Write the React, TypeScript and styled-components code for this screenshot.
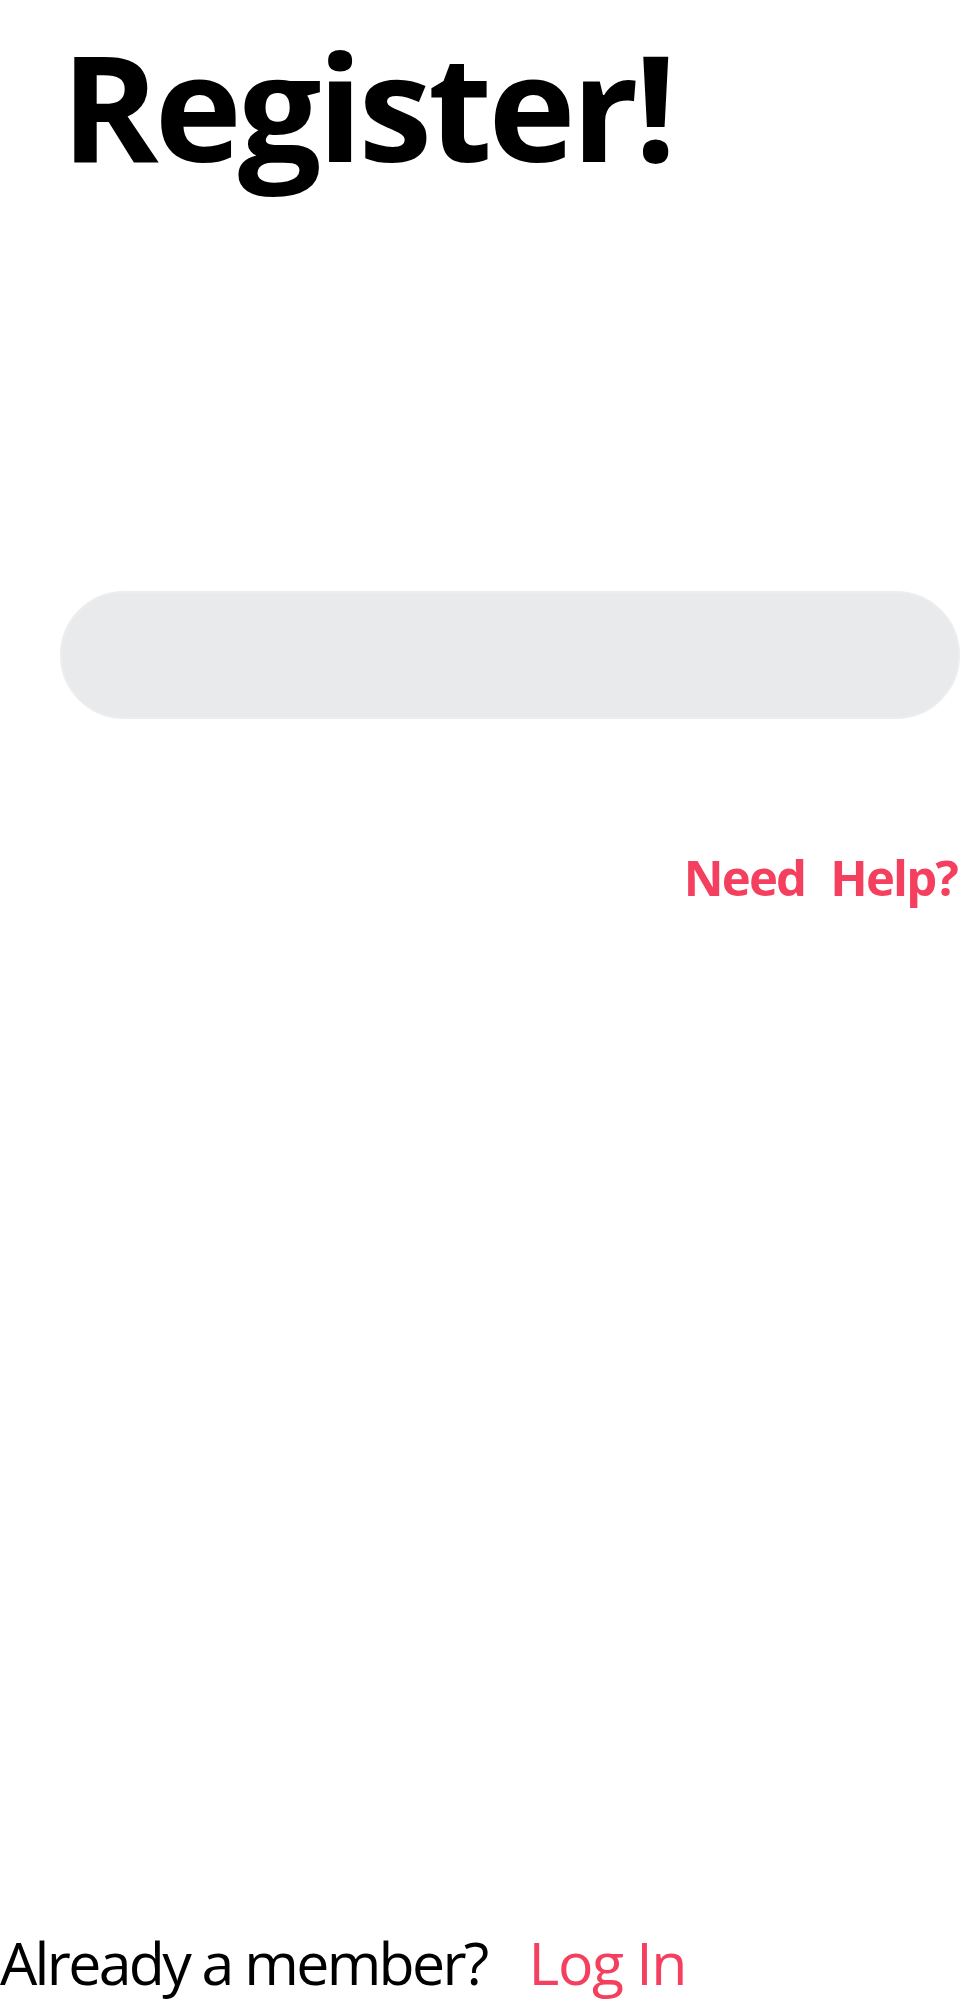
import React from "react";
import styled, { createGlobalStyle } from "styled-components";

const GlobalStyle = createGlobalStyle`
  html, body {
    margin: 0;
    padding: 0;
    background: #ffffff;
  }
  body {
    font-family: "Open Sans", "Noto Sans", sans-serif;
    color: #000000;
  }
  * { box-sizing: border-box; }
`;

const Page = styled.div`
  width: 963px;
  height: 2001px;
  display: flex;
  flex-direction: column;
  overflow: hidden;
`;

const Title = styled.h1`
  margin: 31px 0 0 0;
  padding-left: 61px;
  font-size: 148px;
  line-height: 1;
  font-weight: 700;
  letter-spacing: -4.1px;
`;

const Form = styled.form`
  display: flex;
  flex-direction: column;
  padding-left: 60px;
  margin-top: 412px;
`;

const Field = styled.input`
  width: 900px;
  height: 128px;
  border-radius: 64px;
  border: 2px solid #ededed;
  background: #e8eaeb;
  outline: none;
  padding: 0 48px;
  font-size: 32px;
  font-family: inherit;
`;

const HelpRow = styled.div`
  display: flex;
  justify-content: flex-end;
  padding-right: 6px;
  margin-top: 134px;
`;

const HelpLink = styled.a`
  color: #f43f5e;
  font-weight: 700;
  font-size: 49px;
  line-height: 1;
  text-decoration: none;
  letter-spacing: -1.8px;
  word-spacing: 14px;
`;

const Spacer = styled.div`
  flex: 1;
`;

const Footer = styled.div`
  display: flex;
  align-items: baseline;
  gap: 42px;
  font-size: 59px;
  line-height: 1.28;
  letter-spacing: -2.7px;
`;

const FooterText = styled.span`
  color: #000000;
`;

const FooterLink = styled.a`
  color: #f43f5e;
  text-decoration: none;
  letter-spacing: -1.5px;
`;

export default function App() {
  return (
    <>
      <GlobalStyle />
      <Page>
        <Title>Register!</Title>
        <Form onSubmit={(e) => e.preventDefault()}>
          <Field type="text" aria-label="Email" />
          <HelpRow>
            <HelpLink href="#">Need Help?</HelpLink>
          </HelpRow>
        </Form>
        <Spacer />
        <Footer>
          <FooterText>Already a member?</FooterText>
          <FooterLink href="#">Log In</FooterLink>
        </Footer>
      </Page>
    </>
  );
}
